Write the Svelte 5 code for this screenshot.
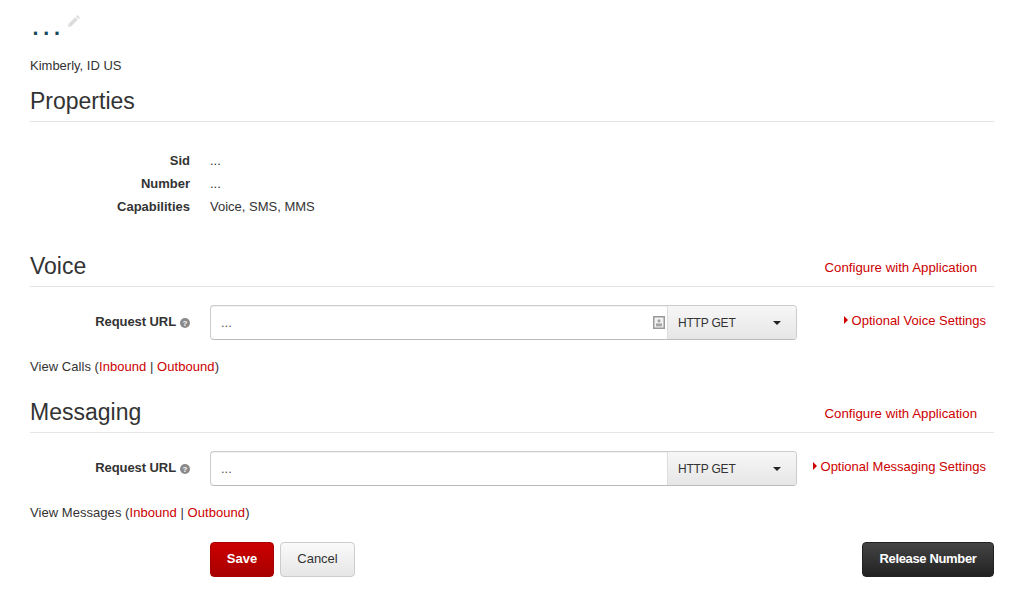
<script>
  const properties = [
    { label: "Sid", value: "..." },
    { label: "Number", value: "..." },
    { label: "Capabilities", value: "Voice, SMS, MMS" },
  ]

  const sections = [
    { title: "Voice", optional: "Optional Voice Settings", view: "View Calls", icon: true },
    { title: "Messaging", optional: "Optional Messaging Settings", view: "View Messages", icon: false },
  ]
</script>

<div class="page">
  <div class="title-row">
    <h1>...</h1>
    <svg class="pencil" width="13" height="13" viewBox="0 0 14 14">
      <path d="M1 13l.8-3.6 7-7 2.8 2.8-7 7z" fill="#dcdcdc" />
      <path d="M9.6 1.6l1-1a1 1 0 0 1 1.3 0l1.5 1.5a1 1 0 0 1 0 1.3l-1 1z" fill="#dcdcdc" />
    </svg>
  </div>
  <p class="location">Kimberly, ID US</p>

  <div class="heading first"><h2>Properties</h2></div>
  <dl class="props">
    {#each properties as prop}
      <dt>{prop.label}</dt>
      <dd>{prop.value}</dd>
    {/each}
  </dl>

  {#each sections as section, i}
    <div class="heading" class:voice={i === 0} class:messaging={i === 1}>
      <h2>{section.title}</h2>
      <a href="#top" class="configure">Configure with Application</a>
    </div>
    <div class="url-row">
      <div class="url-label">
        <span>Request URL</span>
        <svg width="10" height="10" viewBox="0 0 10 10">
          <circle cx="5" cy="5" r="5" fill="#8a8a8a" />
          <text x="5" y="8" text-anchor="middle" font-size="8" font-weight="700" font-family="Liberation Sans" fill="#fff">?</text>
        </svg>
      </div>
      <div class="url-group">
        <div class="url-input">
          <span>...</span>
          {#if section.icon}
            <svg width="12" height="13" viewBox="0 0 12 13">
              <rect x="0.75" y="0.75" width="10.5" height="11.5" fill="#f2f2f2" stroke="#999" stroke-width="1.5" />
              <circle cx="6" cy="4.8" r="1.6" fill="#a5a5a5" />
              <rect x="3" y="7.4" width="6" height="3" fill="#a5a5a5" />
            </svg>
          {/if}
        </div>
        <div class="method">
          <span>HTTP GET</span>
          <i class="caret"></i>
        </div>
      </div>
      <a href="#top" class="optional"><i class="arrow"></i>{section.optional}</a>
    </div>
    <p class="view">{section.view} (<a href="#top">Inbound</a> | <a href="#top">Outbound</a>)</p>
  {/each}

  <div class="actions">
    <button class="save">Save</button>
    <button class="cancel">Cancel</button>
    <button class="release">Release Number</button>
  </div>
</div>

<style>
  :global(body) {
    background: #fff;
  }

  .page {
    width: 964px;
    padding: 0 35px 0 30px;
    font-family: "Liberation Sans", Arial, sans-serif;
    font-size: 13px;
    line-height: 20px;
    color: #333;
  }

  a {
    color: #c00;
    text-decoration: none;
  }

  .title-row {
    display: flex;
    align-items: flex-start;
    height: 56px;
  }

  h1 {
    margin: 0;
    padding: 6px 0 0 1px;
    font-size: 32px;
    font-weight: 400;
    line-height: 36px;
    letter-spacing: 1.8px;
    color: #17475e;
  }

  .pencil {
    margin: 15px 0 0 4px;
  }

  .location {
    margin: 0;
  }

  .heading {
    display: flex;
    justify-content: space-between;
    align-items: flex-end;
    border-bottom: 1px solid #e5e5e5;
    height: 35px;
  }

  .heading.first {
    margin-top: 10px;
  }

  .heading.voice {
    margin-top: 33px;
    height: 36px;
  }

  .heading.messaging {
    margin-top: 20px;
    height: 35px;
  }

  h2 {
    margin: 0;
    font-size: 23px;
    font-weight: 400;
    line-height: 30px;
    color: #333;
    padding-bottom: 5px;
  }

  .configure {
    font-size: 13.25px;
    margin-right: 17px;
    padding-bottom: 8px;
  }

  .props {
    display: grid;
    grid-template-columns: 160px 1fr;
    column-gap: 20px;
    row-gap: 3px;
    margin: 29px 0 0;
  }

  dt {
    font-weight: 700;
    text-align: right;
  }

  dd {
    margin: 0;
  }

  .url-row {
    display: flex;
    align-items: flex-start;
    margin-top: 18px;
  }

  .url-label {
    display: flex;
    align-items: center;
    justify-content: flex-end;
    gap: 4px;
    width: 160px;
    height: 35px;
    margin-right: 20px;
    font-weight: 700;
  }

  .url-label span {
    padding-bottom: 2px;
    letter-spacing: -0.08px;
  }

  .url-group {
    display: flex;
    width: 587px;
    height: 35px;
    box-sizing: border-box;
    border: 1px solid #ccc;
    border-bottom-color: #bbb;
    border-radius: 4px;
  }

  .url-input {
    flex: 1;
    display: flex;
    align-items: center;
    justify-content: space-between;
    padding: 0 2px 0 10px;
    color: #555;
    box-shadow: inset 0 1px 1px rgba(0, 0, 0, 0.06);
  }

  .method {
    display: flex;
    align-items: center;
    justify-content: space-between;
    width: 129px;
    box-sizing: border-box;
    padding: 0 15px 0 10px;
    font-size: 12px;
    letter-spacing: -0.2px;
    color: #333;
    background: linear-gradient(#f7f7f7, #e6e6e6);
    border-left: 1px solid #ddd;
    border-radius: 0 3px 3px 0;
  }

  .caret {
    width: 0;
    height: 0;
    border-left: 4px solid transparent;
    border-right: 4px solid transparent;
    border-top: 4px solid #222;
  }

  .optional {
    margin-left: auto;
    margin-right: 8px;
    padding-top: 6px;
  }

  .arrow {
    display: inline-block;
    width: 0;
    height: 0;
    margin-right: 4px;
    vertical-align: 1px;
    border-top: 4px solid transparent;
    border-bottom: 4px solid transparent;
    border-left: 4px solid #c00;
  }

  .view {
    margin: 17px 0 0;
    letter-spacing: 0.05px;
  }

  .actions {
    display: flex;
    gap: 6px;
    margin: 19px 0 0 180px;
  }

  button {
    height: 35px;
    box-sizing: border-box;
    padding-bottom: 3px;
    border-radius: 4px;
    font-family: inherit;
    font-size: 13px;
  }

  .save {
    width: 64px;
    font-weight: 700;
    color: #fff;
    background: linear-gradient(#cc0000, #a80000);
    border: 1px solid #a80000;
  }

  .cancel {
    width: 75px;
    color: #333;
    background: linear-gradient(#fafafa, #e6e6e6);
    border: 1px solid #ccc;
  }

  .release {
    width: 132px;
    margin-left: auto;
    font-weight: 700;
    letter-spacing: -0.35px;
    color: #fff;
    background: linear-gradient(#444, #222);
    border: 1px solid #222;
  }
</style>
